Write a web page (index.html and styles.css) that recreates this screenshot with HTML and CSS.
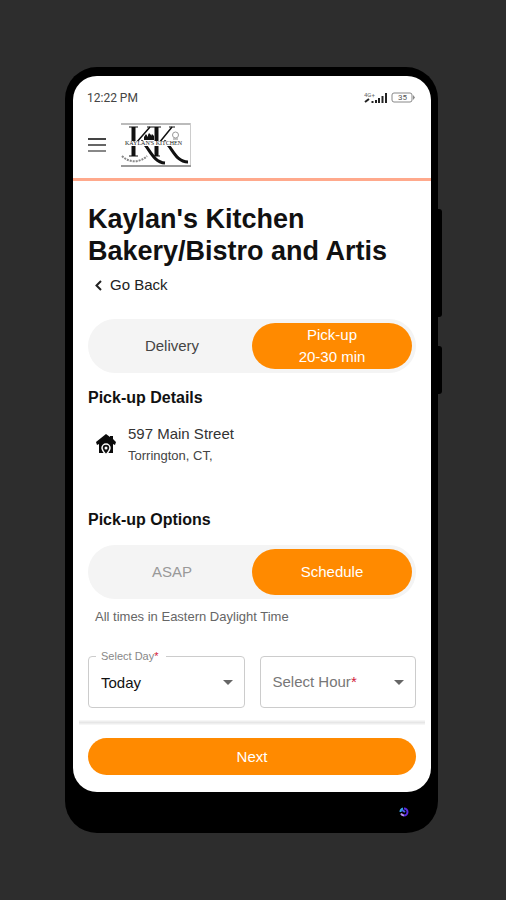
FILE: index.html
```html
<!DOCTYPE html>
<html lang="en">
<head>
  <meta charset="UTF-8">
  <meta name="viewport" content="width=device-width, initial-scale=1.0">
  <title>Kaylan's Kitchen</title>
  <link rel="stylesheet" href="styles.css">
</head>
<body>
  <div class="phone">
    <div class="side-key volume"></div>
    <div class="side-key power"></div>
    <div class="screen">
      <div class="status-bar">
        <span>12:22 PM</span>
        <svg width="52" height="14" viewBox="0 0 52 14" aria-hidden="true">
          <text x="0" y="6" class="tiny-text">4G+</text>
          <path d="M1 11l4-3" stroke="#222" stroke-width="2"/>
          <path d="M8.500 12v-2M12 12v-3M15 12v-5M18.500 12v-7M22 12V2" stroke="#222" stroke-width="2"/>
          <rect x="28" y="2" width="20" height="9" rx="2" fill="#fff" stroke="#888"/>
          <path d="M49 4l2 2.500-2 2.500z" fill="#888"/>
          <text x="34" y="9" class="battery-text">35</text>
        </svg>
      </div>
      <header class="header">
        <button class="menu-btn" aria-label="Menu">
          <svg width="18" height="15" viewBox="0 0 18 15">
            <path d="M0 1h18" stroke="#444" stroke-width="2"/>
            <path d="M0 7h18" stroke="#666" stroke-width="2"/>
            <path d="M0 13h18" stroke="#888" stroke-width="2"/>
          </svg>
        </button>
        <svg class="logo" width="70" height="44" viewBox="0 0 70 44" role="img" aria-label="Kaylan's Kitchen">
          <path d="M0 1h70" stroke="#bbb" stroke-width="2"/>
          <path d="M69.500 0v44" stroke="#ccc"/>
          <path d="M0 43h70" stroke="#999" stroke-width="2"/>
          <g fill="none" stroke="#111">
            <path d="M12.500 4v29M35.500 4v29" stroke-width="4"/>
            <path d="M8 4h9M8 33h9M31 4h9M31 33h8M26 4h5M48 4h6"/>
            <path d="M29 4L15 20M51 4L38 20" stroke-width="1.500"/>
            <path d="M20 18c8 5 11 21 24 22" stroke-width="3"/>
            <path d="M43 18c8 5 11 21 24 21" stroke-width="3"/>
            <circle cx="54.500" cy="12" r="3" stroke="#999"/>
            <path d="M52 16h5" stroke="#888"/>
            <path d="M1 33c7 7 18 7 25 0" stroke="#888" stroke-width="2" stroke-dasharray="2 1"/>
          </g>
          <path d="M23 17v-3l2-3 2 3v3zM27 17v-5l1-2 2 2v5zM30 17v-4l1-2 2 2v4z" fill="#111"/>
          <path d="M3 18h61v5H3z" fill="#fff"/>
          <text x="4" y="22" class="logo-text">KAYLAN'S KITCHEN</text>
        </svg>
      </header>
      <main class="content">
        <h1>Kaylan's Kitchen Bakery/Bistro and Artis</h1>
        <a class="back" href="#">
          <svg width="7" height="11" viewBox="0 0 7 11" aria-hidden="true"><path d="M6 1L1.500 5.500 6 10" fill="none" stroke="#222" stroke-width="2"/></svg>
          Go Back
        </a>
        <div class="toggle">
          <button>Delivery</button>
          <button class="active">Pick-up<br>20-30 min</button>
        </div>
        <h2>Pick-up Details</h2>
        <div class="address">
          <svg width="20" height="22" viewBox="0 0 20 22" aria-hidden="true">
            <path d="M10 0L0 8l1 3 2-1v9h14v-9l2 1 1-3-3-3V2h-3v1z" fill="#0b0b0b"/>
            <path d="M10 21c-3-4-4-5-4-7a4 4 0 0 1 8 0c0 2-1 3-4 7z" fill="#111" stroke="#fff" stroke-width="1.500"/>
            <circle cx="10" cy="14" r="1.500" fill="#fff"/>
          </svg>
          <div>
            <div class="street">597 Main Street</div>
            <div class="city">Torrington, CT,</div>
          </div>
        </div>
        <h2>Pick-up Options</h2>
        <div class="toggle">
          <button class="muted">ASAP</button>
          <button class="active">Schedule</button>
        </div>
        <p class="note">All times in Eastern Daylight Time</p>
        <div class="fields">
          <div class="field filled">
            <label for="day">Select Day<span class="req">*</span></label>
            <select id="day">
              <option>Today</option>
            </select>
          </div>
          <div class="field">
            <label for="hour">Select Hour<span class="req">*</span></label>
            <select id="hour">
              <option></option>
            </select>
          </div>
        </div>
      </main>
      <footer class="footer">
        <button class="next-btn">Next</button>
      </footer>
    </div>
    <svg class="badge" width="10" height="10" viewBox="0 0 10 10" aria-hidden="true">
      <path d="M1.500 5A3.500 3.500 0 0 1 4 1.500" fill="none" stroke="#38a6e8" stroke-width="2"/>
      <path d="M5 1.500A3.500 3.500 0 0 1 5 8.500" fill="none" stroke="#5a2be0" stroke-width="2"/>
      <path d="M2 6.500A3.500 3.500 0 0 0 5 8.500" fill="none" stroke="#b58cf0" stroke-width="2"/>
      <path d="M3 3l3 2" stroke="#4a5cf0" stroke-width="2"/>
    </svg>
  </div>
</body>
</html>
```
FILE: styles.css
```css
* {
  box-sizing: border-box;
}
body {
  margin: 0;
  min-height: 100vh;
  padding: 67px 68px 67px 65px;
  background: #2d2d2d;
  color: #111;
  font-family: "Liberation Sans", Arial, sans-serif;
  font-size: 15px;
}
button, select {
  font: inherit;
  color: inherit;
}
button {
  border: none;
  background: none;
  padding: 0;
  cursor: pointer;
}
.phone {
  position: relative;
  display: flex;
  flex-direction: column;
  padding: 9px 7px 16px 8px;
  background: #000;
  border-radius: 32px;
}
.side-key {
  position: absolute;
  left: 100%;
  width: 4px;
  background: #000;
  border-radius: 0 3px 3px 0;
}
.volume {
  top: 142px;
  height: 108px;
}
.power {
  top: 279px;
  height: 48px;
}
.screen {
  background: #fff;
  border-radius: 24px;
  overflow: hidden;
}
.status-bar {
  display: flex;
  align-items: center;
  justify-content: space-between;
  height: 44px;
  padding: 0 15px 0 14px;
  color: #444;
  font-family: Roboto, sans-serif;
  font-size: 12px;
}
.tiny-text {
  font-size: 6px;
  fill: #666;
}
.battery-text {
  font-size: 8px;
  fill: #555;
}
.header {
  display: flex;
  align-items: center;
  gap: 15px;
  padding: 3px 15px 11px;
  border-bottom: 3px solid #ffa98c;
}
.menu-btn, .logo {
  display: block;
}
.menu-btn svg {
  display: block;
}
.logo-text {
  font-family: "Liberation Serif", serif;
  font-size: 6px;
  fill: #222;
}
.content {
  padding: 22px 15px 16px;
}
h1 {
  margin: 0;
  font-size: 27px;
  line-height: 32px;
}
h2 {
  margin: 0;
  font-size: 16px;
  line-height: 20px;
}
.back {
  display: inline-flex;
  align-items: center;
  gap: 8px;
  margin: 8px 0 24px 7px;
  color: #222;
  line-height: 20px;
  text-decoration: none;
}
.toggle {
  display: flex;
  height: 54px;
  margin-bottom: 15px;
  padding: 4px;
  background: #f4f4f4;
  border-radius: 27px;
}
.toggle button {
  flex: 1;
  border-radius: 23px;
  color: #444;
  line-height: 22px;
}
.toggle .active {
  background: #ff8a00;
  color: #fff;
}
.toggle .muted {
  color: #999;
}
.address {
  display: flex;
  align-items: center;
  gap: 12px;
  margin: 15px 8px 43px;
  line-height: 22px;
}
.street {
  color: #333;
}
.city {
  color: #444;
  font-size: 13px;
}
h2 + .toggle {
  margin: 15px 0 8px;
}
.note {
  margin: 0 7px;
  color: #666;
  font-size: 13px;
  line-height: 20px;
}
.fields {
  display: flex;
  gap: 15px;
  margin-top: 29px;
}
.field {
  position: relative;
  flex: 1;
}
.field::after {
  content: "";
  position: absolute;
  right: 12px;
  top: 24px;
  border: 5px solid transparent;
  border-top-color: #666;
  border-bottom: none;
  pointer-events: none;
}
.field select {
  display: block;
  width: 100%;
  height: 52px;
  padding: 0 12px;
  appearance: none;
  background: #fff;
  border: 1px solid #ccc;
  border-radius: 4px;
}
.field label {
  position: absolute;
  left: 13px;
  top: 16px;
  color: #777;
  line-height: 20px;
  pointer-events: none;
}
.filled label {
  left: 8px;
  top: -8px;
  padding: 0 8px 0 5px;
  background: #fff;
  color: #888;
  font-size: 11px;
  line-height: 16px;
}
.req {
  color: #d3203a;
}
.footer {
  padding: 14px 15px 17px;
  position: relative;
}
.footer::before {
  content: "";
  position: absolute;
  left: 6px;
  right: 6px;
  top: -4px;
  height: 5px;
  background: linear-gradient(#fafafa, #e6e6e6, #fafafa);
}
.next-btn {
  display: block;
  width: 100%;
  height: 37px;
  background: #ff8a00;
  border-radius: 19px;
  color: #fff;
}
.badge {
  align-self: flex-end;
  margin: 15px 22px 0;
}
```
